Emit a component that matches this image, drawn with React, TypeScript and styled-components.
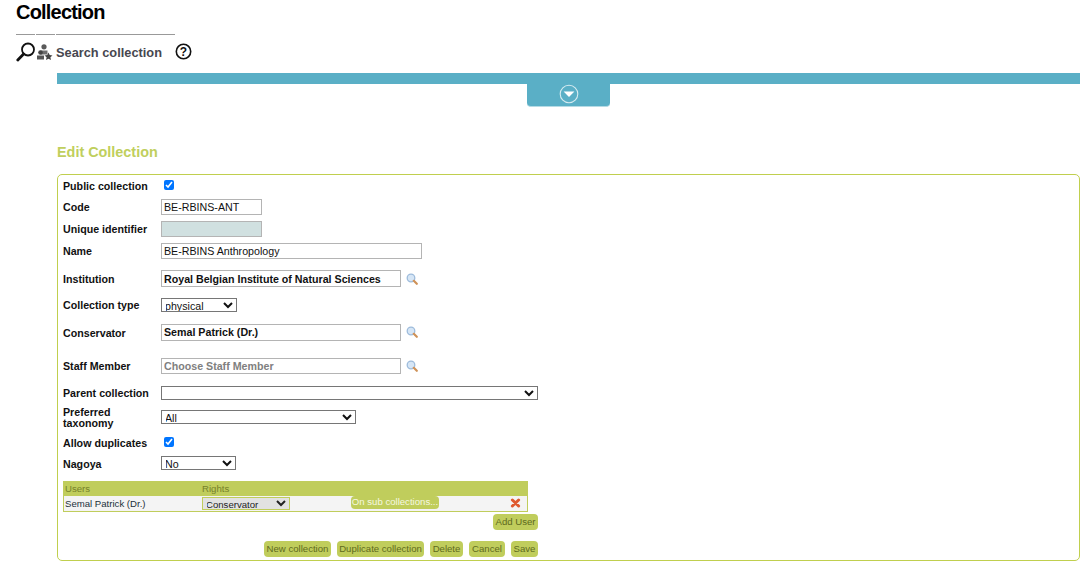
import React from "react";
import styled, { createGlobalStyle } from "styled-components";

const Global = createGlobalStyle`
  html, body { margin: 0; padding: 0; background: #fff; }
  body { font-family: "Liberation Sans", Arial, sans-serif; font-size: 11px; color: #000; overflow: hidden; }
`;

const Page = styled.div`
  width: 1085px;
  height: 566px;
  overflow: hidden;
`;
const Header = styled.header`
  padding: 0 0 0 16px;
`;
const Title = styled.h1`
  margin: 0;
  height: 34px;
  font-size: 20px;
  line-height: 24px;
  font-weight: bold;
  letter-spacing: -0.8px;
`;
const Rule = styled.div`
  display: flex;
  gap: 1px;
  width: 159px;
`;
const RuleSegment = styled.span<{ $w: number }>`
  flex: none;
  width: ${(p) => p.$w}px;
  height: 1px;
  background: #999;
`;
const SearchRow = styled.div`
  display: flex;
  align-items: center;
  height: 20px;
  margin-top: 7px;
`;
const SearchLabel = styled.span`
  margin-left: 3px;
  font-size: 12.8px;
  font-weight: bold;
  color: #47474f;
`;
const HelpIcon = styled.svg`
  margin: 0 0 2px 13px;
`;
const Main = styled.main`
  margin: 11px 5px 0 57px;
`;
const Bar = styled.div`
  height: 11px;
  background: #5aafc6;
`;
const Tab = styled.div`
  width: 83px;
  height: 23px;
  margin-left: 470px;
  padding-bottom: 3px;
  background: #5aafc6;
  border-radius: 0 0 4px 4px;
  border-bottom: 1px solid #b5dbe5;
  box-sizing: border-box;
  display: flex;
  align-items: center;
  justify-content: center;
`;
const Heading = styled.h2`
  margin: 37px 0 0;
  height: 30px;
  font-size: 14.4px;
  line-height: 17px;
  font-weight: bold;
  color: #c0cf5d;
`;
const Form = styled.form`
  box-sizing: border-box;
  height: 387px;
  border: 1px solid #c0cf4e;
  border-radius: 5px;
  padding: 1px 5px 0;
`;
const Row = styled.div<{ $h: number }>`
  display: flex;
  align-items: center;
  height: ${(p) => p.$h}px;
`;
const Label = styled.label`
  width: 98px;
  flex: none;
  font-size: 10.67px;
  line-height: 11px;
  font-weight: bold;
  color: #111;
`;
const Check = styled.input`
  margin: 0 0 3px 3px;
  width: 10px;
  height: 10px;
`;
const TextInput = styled.input<{ $w: number; $h?: number; $bold?: boolean; $disabled?: boolean; $muted?: boolean }>`
  box-sizing: border-box;
  width: ${(p) => p.$w}px;
  height: ${(p) => p.$h ?? 16}px;
  margin: 0 0 2px;
  padding: 0 2px;
  border: 1px solid #b4b4b4;
  border-radius: 0;
  outline: none;
  font-family: "Liberation Sans", Arial, sans-serif;
  font-size: 10.67px;
  font-weight: ${(p) => (p.$bold ? "bold" : "normal")};
  background: ${(p) => (p.$disabled ? "#d0e0e0" : "#fff")};
  color: ${(p) => (p.$muted ? "#808080" : "#111")};
`;
const Select = styled.select<{ $w: number }>`
  box-sizing: border-box;
  width: ${(p) => p.$w}px;
  height: 14px;
  margin: 0 0 2px;
  padding: 0;
  text-indent: -1px;
  border: 1px solid #767676;
  border-radius: 0;
  background: #fff;
  font-family: "Liberation Sans", Arial, sans-serif;
  font-size: 10.67px;
  color: #111;
`;
const Lookup = styled.svg`
  margin: 0 0 2px 5px;
  flex: none;
`;
const Users = styled.div`
  width: 465px;
  margin-top: 9px;
  border: 1px solid #c0cd5c;
  border-top: none;
  box-sizing: border-box;
`;
const UsersHead = styled.div`
  display: flex;
  align-items: center;
  height: 15px;
  padding-left: 1px;
  background: #c0cd5c;
  font-size: 9.6px;
  color: #75812a;
`;
const UsersRow = styled.div`
  display: flex;
  align-items: center;
  height: 15px;
  padding-left: 1px;
  background: #f4f4f4;
  font-size: 9.6px;
  color: #22303a;
`;
const UserCell = styled.span<{ $lift?: boolean }>`
  width: 137px;
  flex: none;
  margin-bottom: ${(p) => (p.$lift ? 1 : 0)}px;
`;
const RightsSelect = styled.select`
  box-sizing: border-box;
  width: 88px;
  height: 13px;
  margin: 0;
  padding: 0;
  text-indent: -1px;
  border: 1px solid #c0cd5c;
  border-radius: 0;
  background: #e2e2e2;
  font-family: "Liberation Sans", Arial, sans-serif;
  font-size: 9.6px;
  color: #222;
`;
const SubButton = styled.span`
  margin: 0 0 2px 61px;
  width: 88px;
  height: 13px;
  line-height: 12px;
  text-align: center;
  background: #c0cd5c;
  color: #f6f8e0;
  border-radius: 4px;
  font-size: 9.6px;
  white-space: nowrap;
`;
const Remove = styled.svg`
  margin: 0 0 1px 71px;
`;
const Actions = styled.div<{ $top: number }>`
  display: flex;
  justify-content: flex-end;
  gap: 6px;
  width: 475px;
  margin-top: ${(p) => p.$top}px;
`;
const Btn = styled.span<{ $w: number }>`
  box-sizing: border-box;
  width: ${(p) => p.$w}px;
  height: 16px;
  line-height: 16px;
  text-align: center;
  background: #c0cd5c;
  border-radius: 4px;
  color: #5e6a1c;
  font-size: 9.6px;
  white-space: nowrap;
`;

const Mag = () => (
  <Lookup width="12" height="12" viewBox="0 0 12 12">
    <circle cx="5" cy="5" r="3.8" fill="#d6e6f6" stroke="#9dbbdb" strokeWidth="1.3" />
    <path d="M7.8 7.8 10.8 10.8" stroke="#cf9258" strokeWidth="2.2" strokeLinecap="round" />
  </Lookup>
);

export default function App() {
  return (
    <Page>
      <Global />
      <Header>
        <Title>Collection</Title>
        <Rule>
          <RuleSegment $w={19} />
          <RuleSegment $w={19} />
          <RuleSegment $w={119} />
        </Rule>
        <SearchRow>
          <svg width="20" height="20" viewBox="0 0 20 20">
            <circle cx="12" cy="7.5" r="6" fill="none" stroke="#111" strokeWidth="1.8" />
            <path d="M7.6 12 1.8 18" stroke="#111" strokeWidth="2.8" strokeLinecap="round" />
          </svg>
          <svg width="17" height="18" viewBox="0 0 17 18">
            <circle cx="8" cy="3.8" r="2.6" fill="#5a5a5a" />
            <path d="M4.5 7.5h7v4h-7z" fill="#6e6e6e" />
            <circle cx="4.5" cy="9.5" r="2.3" fill="#444" />
            <path d="M1 12.5h7v4H1z" fill="#555" />
            <path d="M12.5 9.5l1.2 2.6 2.8.3-2.1 1.9.6 2.8-2.5-1.4-2.5 1.4.6-2.8-2.1-1.9 2.8-.3z" fill="#444" />
          </svg>
          <SearchLabel>Search collection</SearchLabel>
          <HelpIcon width="17" height="17" viewBox="0 0 17 17">
            <circle cx="8.5" cy="8.5" r="7.2" fill="#fff" stroke="#111" strokeWidth="1.6" />
            <text x="8.5" y="12.7" textAnchor="middle" fontFamily="Liberation Sans" fontWeight="bold" fontSize="12" fill="#111">?</text>
          </HelpIcon>
        </SearchRow>
      </Header>
      <Main>
        <Bar />
        <Tab>
          <svg width="20" height="20" viewBox="0 0 20 20">
            <circle cx="10" cy="10" r="8.8" fill="none" stroke="#d5ebf0" strokeWidth="1.1" />
            <path d="M4.6 7.5h10.8L10 13z" fill="#fff" />
          </svg>
        </Tab>
        <Heading>Edit Collection</Heading>
        <Form>
          <Row $h={21}>
            <Label>Public collection</Label>
            <Check type="checkbox" defaultChecked />
          </Row>
          <Row $h={21}>
            <Label>Code</Label>
            <TextInput $w={101} defaultValue="BE-RBINS-ANT" />
          </Row>
          <Row $h={23}>
            <Label>Unique identifier</Label>
            <TextInput $w={101} $disabled />
          </Row>
          <Row $h={21}>
            <Label>Name</Label>
            <TextInput $w={261} defaultValue="BE-RBINS Anthropology" />
          </Row>
          <Row $h={35}>
            <Label>Institution</Label>
            <TextInput $w={240} $h={17} $bold defaultValue="Royal Belgian Institute of Natural Sciences" />
            <Mag />
          </Row>
          <Row $h={17}>
            <Label>Collection type</Label>
            <Select $w={76} defaultValue="physical">
              <option>physical</option>
            </Select>
          </Row>
          <Row $h={38}>
            <Label>Conservator</Label>
            <TextInput $w={240} $h={17} $bold defaultValue="Semal Patrick (Dr.)" />
            <Mag />
          </Row>
          <Row $h={29}>
            <Label>Staff Member</Label>
            <TextInput $w={240} $bold $muted defaultValue="Choose Staff Member" />
            <Mag />
          </Row>
          <Row $h={25}>
            <Label>Parent collection</Label>
            <Select $w={377}>
              <option></option>
            </Select>
          </Row>
          <Row $h={24}>
            <Label>Preferred taxonomy</Label>
            <Select $w={195} defaultValue="All">
              <option>All</option>
            </Select>
          </Row>
          <Row $h={26}>
            <Label>Allow duplicates</Label>
            <Check type="checkbox" defaultChecked />
          </Row>
          <Row $h={16}>
            <Label>Nagoya</Label>
            <Select $w={75} defaultValue="No">
              <option>No</option>
            </Select>
          </Row>
          <Users>
            <UsersHead>
              <UserCell>Users</UserCell>
              <span>Rights</span>
            </UsersHead>
            <UsersRow>
              <UserCell $lift>Semal Patrick (Dr.)</UserCell>
              <RightsSelect defaultValue="Conservator">
                <option>Conservator</option>
              </RightsSelect>
              <SubButton>On sub collections...</SubButton>
              <Remove width="11" height="10" viewBox="0 0 11 10">
                <path d="M2.4 2 8.6 8M8.6 2 2.4 8" stroke="#df5a30" strokeWidth="3" strokeLinecap="round" />
              </Remove>
            </UsersRow>
          </Users>
          <Actions $top={2}>
            <Btn $w={45}>Add User</Btn>
          </Actions>
          <Actions $top={11}>
            <Btn $w={67}>New collection</Btn>
            <Btn $w={87}>Duplicate collection</Btn>
            <Btn $w={33}>Delete</Btn>
            <Btn $w={36}>Cancel</Btn>
            <Btn $w={27}>Save</Btn>
          </Actions>
        </Form>
      </Main>
    </Page>
  );
}
